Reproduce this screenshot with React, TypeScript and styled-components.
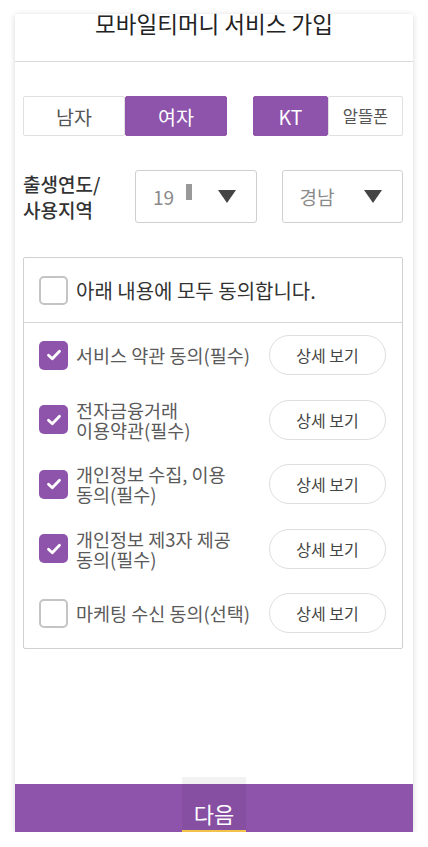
import React, { useState } from 'react';
import styled, { createGlobalStyle } from 'styled-components';

const PURPLE = '#8e54ab';

const GlobalStyle = createGlobalStyle`
    html, body {
        margin: 0;
        padding: 0;
        background: #ffffff;
    }
    body {
        font-family: "Noto Sans CJK KR", "Noto Sans", sans-serif;
        color: #333;
    }
    * { box-sizing: border-box; }
`;

type Term = { id: string; label: string; required: boolean };

// line breaks follow the reference layout
const terms: Term[] = [
    { id: 'service', label: '서비스 약관 동의(필수)', required: true },
    { id: 'finance', label: '전자금융거래\n이용약관(필수)', required: true },
    { id: 'privacy', label: '개인정보 수집, 이용\n동의(필수)', required: true },
    { id: 'third', label: '개인정보 제3자 제공\n동의(필수)', required: true },
    { id: 'marketing', label: '마케팅 수신 동의(선택)', required: false },
];

const Check = (props: { checked: boolean; onClick: () => void }) => (
    <CheckBox checked={props.checked} onClick={props.onClick}>
        {props.checked &&
            <svg width="18" height="18" viewBox="0 0 18 18">
                <path d="M3.5 9.2 L7.3 12.8 L14.5 5.2" fill="none" stroke="#fff" strokeWidth="2.8" strokeLinecap="round" strokeLinejoin="round" />
            </svg>
        }
    </CheckBox>
);

const App = () => {
    const [gender, setGender] = useState('female');
    const [carrier, setCarrier] = useState('KT');
    const [agreed, setAgreed] = useState<{[key: string]: boolean}>({
        service: true, finance: true, privacy: true, third: true, marketing: false,
    });
    const allAgreed = terms.every(t => agreed[t.id]);

    const toggleAll = () => {
        const next: {[key: string]: boolean} = {};
        terms.forEach(t => { next[t.id] = !allAgreed; });
        setAgreed(next);
    };

    return (
        <>
            <GlobalStyle />
            <Panel>
                <Header>
                    <Title>모바일티머니 서비스 가입</Title>
                </Header>
                <Content>
                    <SegmentRow>
                        <Segment width={204}>
                            <SegButton active={gender === 'male'} onClick={() => setGender('male')}>남자</SegButton>
                            <SegButton active={gender === 'female'} onClick={() => setGender('female')}>여자</SegButton>
                        </Segment>
                        <Segment width={150}>
                            <SegButton active={carrier === 'KT'} onClick={() => setCarrier('KT')}>KT</SegButton>
                            <SegButton active={carrier === 'MVNO'} small onClick={() => setCarrier('MVNO')}>알뜰폰</SegButton>
                        </Segment>
                    </SegmentRow>
                    <SelectRow>
                        <FieldLabel>출생연도/<br />사용지역</FieldLabel>
                        <Select>
                            <SelectValue>19<Caret /></SelectValue>
                            <Arrow />
                        </Select>
                        <Select>
                            <SelectValue>경남</SelectValue>
                            <Arrow />
                        </Select>
                    </SelectRow>
                    <AgreeBox>
                        <AgreeAll>
                            <Check checked={allAgreed} onClick={toggleAll} />
                            <AgreeAllText>아래 내용에 모두 동의합니다.</AgreeAllText>
                        </AgreeAll>
                        <TermList>
                            {terms.map(t => (
                                <TermRow key={t.id}>
                                    <Check checked={!!agreed[t.id]} onClick={() => setAgreed({ ...agreed, [t.id]: !agreed[t.id] })} />
                                    <TermText>{t.label}</TermText>
                                    <DetailButton>상세 보기</DetailButton>
                                </TermRow>
                            ))}
                        </TermList>
                    </AgreeBox>
                </Content>
                <BottomBar>
                    <NextButton>다음</NextButton>
                </BottomBar>
            </Panel>
        </>
    );
};

const Panel = styled.div`
    width: 398px;
    height: 818px;
    margin: 14px 0 0 15px;
    background: #fff;
    box-shadow: 0 1px 6px rgba(0,0,0,0.16);
    display: flex;
    flex-direction: column;
`;

const Header = styled.div`
    height: 48px;
    border-bottom: 1px solid #dcdcdc;
    display: flex;
    justify-content: center;
    align-items: flex-start;
`;

const Title = styled.div`
    font-size: 22.5px;
    line-height: 20px;
    color: #222;
    margin-top: -1px;
`;

const Content = styled.div`
    padding: 34px 10px 0 8px;
    display: flex;
    flex-direction: column;
    gap: 34px;
`;

const SegmentRow = styled.div`
    display: flex;
    justify-content: space-between;
`;

const Segment = styled.div<{width: number}>`
    width: ${props => props.width}px;
    height: 40px;
    display: flex;
`;

const SegButton = styled.button<{active: boolean, small?: boolean}>`
    flex: 1;
    border: 1px solid ${props => props.active ? PURPLE : '#e0e0e0'};
    background: ${props => props.active ? PURPLE : '#fff'};
    color: ${props => props.active ? '#fff' : '#555'};
    font-family: "Noto Sans CJK KR", sans-serif;
    font-size: ${props => props.small ? '16.5px' : '19.5px'};
    border-radius: 2px;
    padding: 0;
    cursor: pointer;
`;

const SelectRow = styled.div`
    display: flex;
    align-items: center;
    height: 53px;
    gap: 25px;
`;

const FieldLabel = styled.div`
    width: 87px;
    font-size: 19px;
    font-weight: 500;
    line-height: 26px;
    color: #333;
    white-space: nowrap;
`;

const Select = styled.div`
    flex: 1;
    height: 53px;
    border: 1px solid #cfcfcf;
    border-radius: 3px;
    display: flex;
    align-items: center;
    justify-content: space-between;
    padding: 0 20px 0 17px;
`;

const SelectValue = styled.span`
    font-size: 19px;
    color: #8a8a8a;
    display: flex;
    align-items: center;
`;

const Caret = styled.span`
    display: inline-block;
    width: 6px;
    height: 16px;
    background: #999;
    margin: -10px 0 0 12px;
`;

const Arrow = styled.span`
    width: 0;
    height: 0;
    border-left: 9px solid transparent;
    border-right: 9px solid transparent;
    border-top: 13px solid #444;
`;

const AgreeBox = styled.div`
    border: 1px solid #d0d0d0;
    border-radius: 2px;
    padding-bottom: 2px;
`;

const AgreeAll = styled.div`
    height: 65px;
    display: flex;
    align-items: center;
    padding-left: 15px;
    border-bottom: 1px solid #d6d6d6;
    gap: 8px;
`;

const AgreeAllText = styled.span`
    font-size: 20px;
    color: #333;
`;

const TermList = styled.div`
    display: flex;
    flex-direction: column;
`;

const TermRow = styled.div`
    height: 64.5px;
    display: flex;
    align-items: center;
    padding: 0 16px 0 15px;
    gap: 8px;
`;

const CheckBox = styled.div<{checked: boolean}>`
    width: 29px;
    height: 29px;
    flex-shrink: 0;
    border-radius: 5px;
    border: ${props => props.checked ? 'none' : '2px solid #c4c4c4'};
    background: ${props => props.checked ? PURPLE : '#fff'};
    display: flex;
    align-items: center;
    justify-content: center;
    cursor: pointer;
`;

const TermText = styled.span`
    flex: 1;
    font-size: 18.5px;
    line-height: 20px;
    color: #5a5a5a;
    white-space: pre-line;
`;

const DetailButton = styled.button`
    width: 117px;
    height: 40px;
    flex-shrink: 0;
    border: 1px solid #dedede;
    border-radius: 20px;
    background: #fff;
    font-family: "Noto Sans CJK KR", sans-serif;
    font-size: 16px;
    color: #444;
    cursor: pointer;
`;

const BottomBar = styled.div`
    margin-top: auto;
    height: 48px;
    background: ${PURPLE};
    display: flex;
    justify-content: center;
`;

const NextButton = styled.button`
    width: 64px;
    height: 55px;
    margin-top: -7px;
    border: none;
    border-bottom: 2px solid #f2c24a;
    background: rgba(0,0,0,0.05);
    color: #fff;
    font-family: "Noto Sans CJK KR", sans-serif;
    font-size: 22px;
    display: flex;
    align-items: flex-end;
    justify-content: center;
    padding: 0 0 1px;
    cursor: pointer;
`;

export default App;
